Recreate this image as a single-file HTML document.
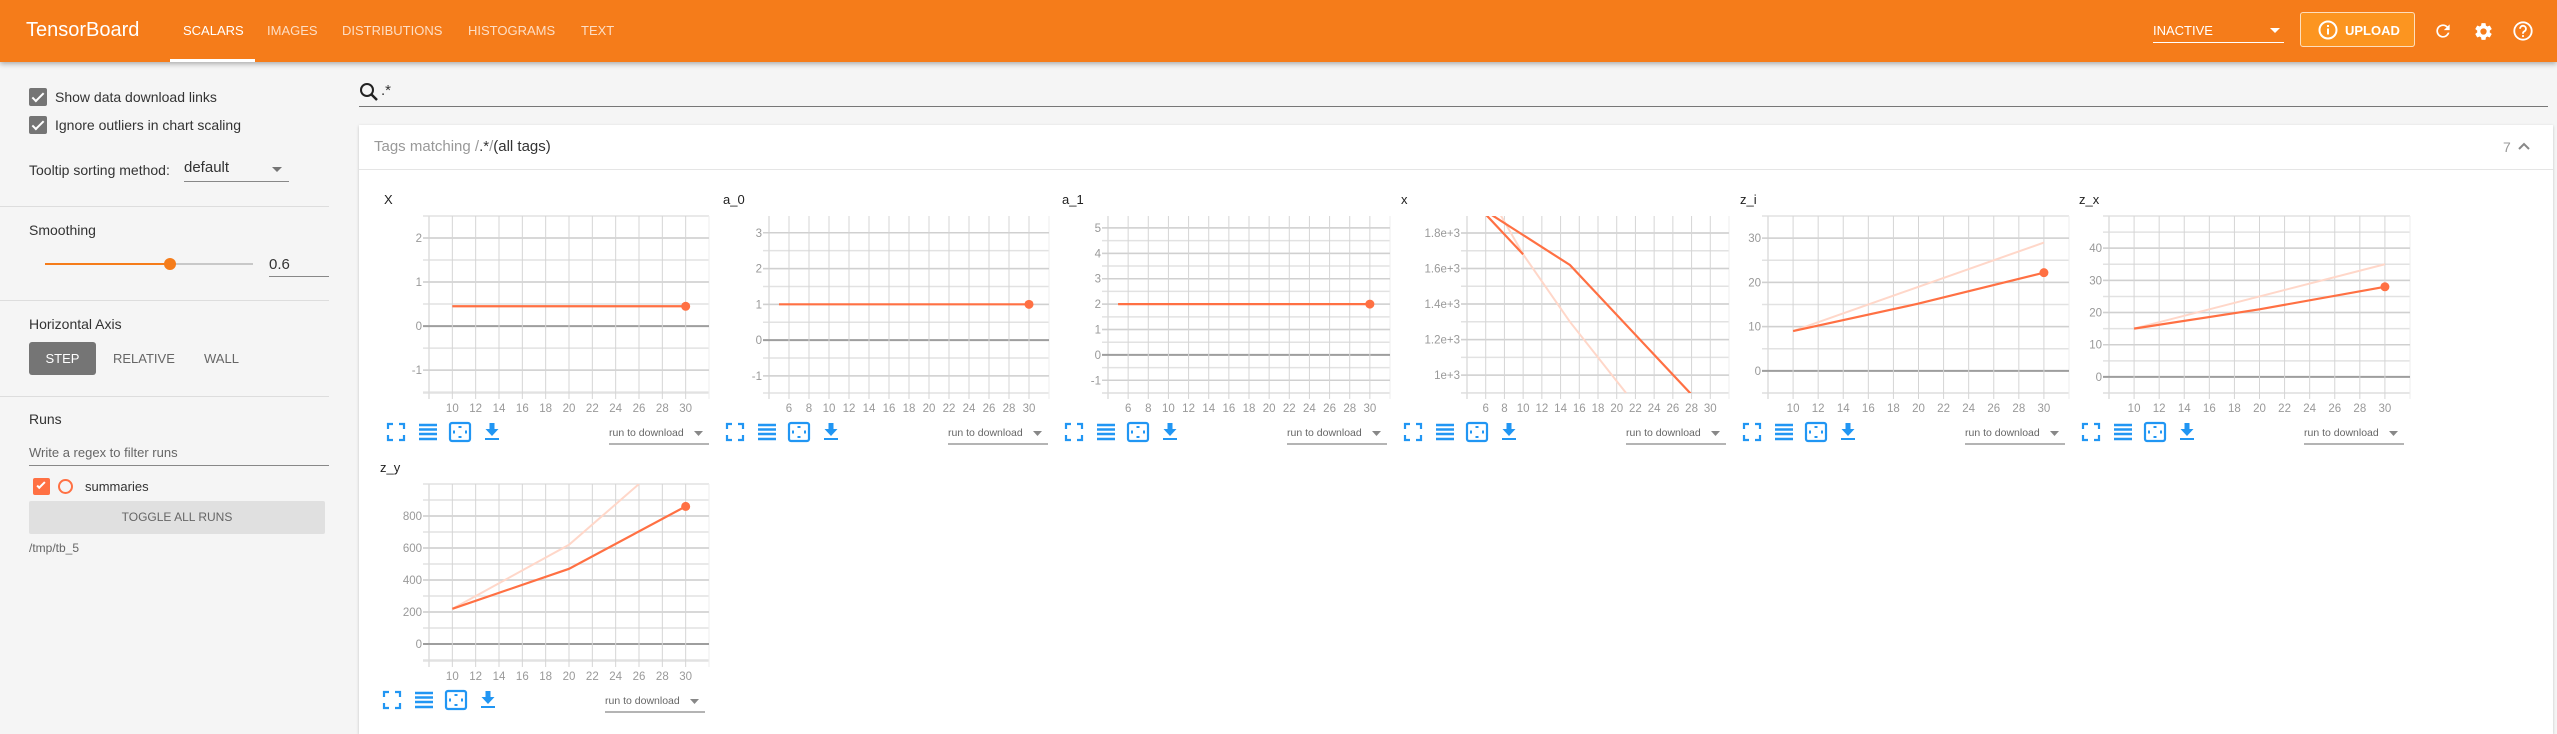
<!DOCTYPE html>
<html><head><meta charset="utf-8">
<style>
*{box-sizing:border-box;margin:0;padding:0}
body{width:2557px;height:734px;overflow:hidden;background:#f5f5f5;font-family:"Liberation Sans",sans-serif;position:relative;color:#212121}
.a{position:absolute;white-space:nowrap}
#hdr{position:absolute;left:0;top:0;width:2557px;height:62px;background:#f57c1a;box-shadow:0 2px 5px rgba(0,0,0,.3);z-index:2}
.nav{position:absolute;top:23px;font-size:13px;color:rgba(255,255,255,.75)}
.cb{position:absolute;width:18px;height:18px;background:#757575;border-radius:2px}
.cb:after{content:"";position:absolute;left:6px;top:2px;width:4px;height:10px;border:solid #fff;border-width:0 2px 2px 0;transform:rotate(45deg)}
.hr{position:absolute;left:0;width:329px;height:1px;background:#ddd}
.sb{font-size:14px;color:#333}
</style></head><body>
<div id="hdr">
 <div class="a" style="left:26px;top:19px;font-size:20px;color:#fff">TensorBoard</div>
 <div class="nav" style="left:183px;color:#fff">SCALARS</div>
 <div class="nav" style="left:267px">IMAGES</div>
 <div class="nav" style="left:342px">DISTRIBUTIONS</div>
 <div class="nav" style="left:468px">HISTOGRAMS</div>
 <div class="nav" style="left:581px">TEXT</div>
 <div class="a" style="left:170px;top:59px;width:85px;height:3px;background:#fff"></div>
 <div class="a" style="left:2153px;top:23px;font-size:13px;color:#fff">INACTIVE</div>
 <div class="a" style="left:2270px;top:28px;width:0;height:0;border-left:5px solid transparent;border-right:5px solid transparent;border-top:5px solid #fff"></div>
 <div class="a" style="left:2153px;top:42px;width:131px;height:1px;background:#fff"></div>
 <div class="a" style="left:2300px;top:12px;width:115px;height:35px;border:1px solid rgba(255,255,255,.7);border-radius:3px;background:#fc9520"></div>
 <svg class="a" style="left:2318px;top:20px" width="20" height="20" viewBox="0 0 20 20"><circle cx="10" cy="10" r="8.5" fill="none" stroke="#fff" stroke-width="2"/><rect x="9" y="8.5" width="2" height="6" fill="#fff"/><rect x="9" y="5" width="2" height="2" fill="#fff"/></svg>
 <div class="a" style="left:2345px;top:23px;font-size:13px;color:#fff;font-weight:bold">UPLOAD</div>
 <svg class="a" style="left:2433px;top:21px" width="20" height="20" viewBox="0 0 24 24"><path fill="#fff" d="M17.65 6.35A7.96 7.96 0 0 0 12 4a8 8 0 1 0 7.73 10h-2.08A6 6 0 1 1 12 6c1.66 0 3.14.69 4.22 1.78L13 11h7V4l-2.35 2.35z"/></svg>
 <svg class="a" style="left:2473px;top:21px" width="21" height="21" viewBox="0 0 24 24"><path fill="#fff" d="M19.14 12.94c.04-.3.06-.61.06-.94 0-.32-.02-.64-.07-.94l2.03-1.58a.49.49 0 0 0 .12-.61l-1.92-3.32a.49.49 0 0 0-.59-.22l-2.39.96c-.5-.38-1.03-.7-1.62-.94l-.36-2.54a.48.48 0 0 0-.48-.41h-3.84c-.24 0-.43.17-.47.41l-.36 2.54c-.59.24-1.13.57-1.62.94l-2.39-.96a.48.48 0 0 0-.59.22L2.74 8.87c-.12.21-.08.47.12.61l2.03 1.58c-.05.3-.09.63-.09.94s.02.64.07.94l-2.03 1.58a.49.49 0 0 0-.12.61l1.92 3.32c.12.22.37.29.59.22l2.39-.96c.5.38 1.03.7 1.62.94l.36 2.54c.05.24.24.41.48.41h3.84c.24 0 .44-.17.47-.41l.36-2.54c.59-.24 1.13-.56 1.62-.94l2.39.96c.22.08.47 0 .59-.22l1.92-3.32c.12-.22.07-.47-.12-.61l-2.01-1.58zM12 15.6A3.6 3.6 0 1 1 12 8.4a3.6 3.6 0 0 1 0 7.2z"/></svg>
 <svg class="a" style="left:2512px;top:20px" width="22" height="22" viewBox="0 0 24 24"><circle cx="12" cy="12" r="9.5" fill="none" stroke="#fff" stroke-width="2"/><path d="M8.8 9.5a3.2 3.2 0 1 1 4.6 2.9c-.9.5-1.4 1-1.4 2.1v.5" fill="none" stroke="#fff" stroke-width="2"/><rect x="11" y="16.5" width="2" height="2" fill="#fff"/></svg>
</div>

<!-- sidebar -->
<div class="cb" style="left:29px;top:88px"></div>
<div class="a sb" style="left:55px;top:89px">Show data download links</div>
<div class="cb" style="left:29px;top:116px"></div>
<div class="a sb" style="left:55px;top:117px">Ignore outliers in chart scaling</div>
<div class="a sb" style="left:29px;top:162px">Tooltip sorting method:</div>
<div class="a" style="left:184px;top:159px;font-size:15px;color:#333">default</div>
<div class="a" style="left:272px;top:167px;border-left:5px solid transparent;border-right:5px solid transparent;border-top:5px solid #757575"></div>
<div class="a" style="left:184px;top:181px;width:105px;height:1px;background:#888"></div>
<div class="hr" style="top:206px"></div>
<div class="a sb" style="left:29px;top:222px">Smoothing</div>
<div class="a" style="left:45px;top:263px;width:208px;height:2px;background:#c8c8c8"></div>
<div class="a" style="left:45px;top:263px;width:125px;height:2px;background:#f57c1a"></div>
<div class="a" style="left:164px;top:258px;width:12px;height:12px;border-radius:50%;background:#f57c1a"></div>
<div class="a" style="left:269px;top:256px;font-size:15px;color:#333">0.6</div>
<div class="a" style="left:269px;top:276px;width:60px;height:1px;background:#888"></div>
<div class="hr" style="top:300px"></div>
<div class="a sb" style="left:29px;top:316px">Horizontal Axis</div>
<div class="a" style="left:29px;top:342px;width:67px;height:33px;background:#757575;border-radius:3px;color:#fff;font-size:13px;text-align:center;line-height:33px">STEP</div>
<div class="a" style="left:113px;top:351px;font-size:13px;color:#666">RELATIVE</div>
<div class="a" style="left:204px;top:351px;font-size:13px;color:#666">WALL</div>
<div class="hr" style="top:396px"></div>
<div class="a sb" style="left:29px;top:411px">Runs</div>
<div class="a" style="left:29px;top:445px;font-size:13px;color:#666">Write a regex to filter runs</div>
<div class="a" style="left:29px;top:465px;width:300px;height:1px;background:#888"></div>
<div class="a" style="left:33px;top:478px;width:17px;height:17px;background:#ff7043;border-radius:2px"></div>
<div class="a" style="left:39px;top:480px;width:4px;height:9px;border:solid #fff;border-width:0 2px 2px 0;transform:rotate(45deg)"></div>
<div class="a" style="left:58px;top:479px;width:15px;height:15px;border:2px solid #ff7043;border-radius:50%"></div>
<div class="a" style="left:85px;top:479px;font-size:13px;color:#333">summaries</div>
<div class="a" style="left:29px;top:501px;width:296px;height:33px;background:#e0e0e0;border-radius:2px;text-align:center;line-height:33px;font-size:12px;color:#666">TOGGLE ALL RUNS</div>
<div class="a" style="left:29px;top:541px;font-size:12px;color:#666">/tmp/tb_5</div>

<!-- main -->
<svg class="a" style="left:359px;top:82px" width="20" height="20" viewBox="0 0 20 20"><circle cx="8" cy="8" r="6" fill="none" stroke="#222" stroke-width="2"/><path d="M12.5 12.5 18 18" stroke="#222" stroke-width="2.5"/></svg>
<div class="a" style="left:381px;top:82px;font-size:15px;color:#333">.*</div>
<div class="a" style="left:359px;top:106px;width:2189px;height:1px;background:#777"></div>
<div class="a" style="left:359px;top:125px;width:2194px;height:609px;background:#fff;box-shadow:0 1px 3px rgba(0,0,0,.2)"></div>
<div class="a" style="left:359px;top:169px;width:2194px;height:1px;background:#e5e5e5"></div>
<div class="a" style="left:374px;top:138px;font-size:15px;color:#999">Tags matching /<span style="color:#333">.*</span>/<span style="color:#333">(all tags)</span></div>
<div class="a" style="left:2503px;top:139px;font-size:14px;color:#999">7</div>
<svg class="a" style="left:2517px;top:140px" width="14" height="12" viewBox="0 0 14 12"><path d="M2 9 7 4 12 9" fill="none" stroke="#888" stroke-width="2"/></svg>
<div id="charts"></div>
<script>
var S='';
function ch(c){
 var ty=c.ty,top=ty+18,bot=ty+195,pl=c.tx+c.l,pr=c.tx+c.r;
 var X=function(v){return pl+(v-c.xd[0])/(c.xd[1]-c.xd[0])*(pr-pl)};
 var Y=function(v){return bot-(v-c.yd[0])/(c.yd[1]-c.yd[0])*(bot-top)};
 var s='<svg class="a" style="left:0;top:0" width="2557" height="734">';
 s+='<text x="'+c.tx+'" y="'+(ty+6)+'" font-size="13" fill="#222" font-family="Liberation Sans">'+c.t+'</text>';
 for(var v=Math.ceil(c.yd[0]/c.ys)*c.ys;v<=c.yd[1]+1e-9;v+=c.ys){var y=Y(v);s+='<line x1="'+(pl-6)+'" x2="'+pr+'" y1="'+y+'" y2="'+y+'" stroke="#e2e2e2" stroke-width="1.5"/>';}
 s+='<line x1="'+(pl-6)+'" x2="'+pr+'" y1="'+bot+'" y2="'+bot+'" stroke="#e2e2e2" stroke-width="1.5"/>';
 s+='<line x1="'+pl+'" x2="'+pl+'" y1="'+top+'" y2="'+(bot+6)+'" stroke="#ddd" stroke-width="1.5"/>';
 s+='<line x1="'+pr+'" x2="'+pr+'" y1="'+top+'" y2="'+(bot+6)+'" stroke="#eee" stroke-width="1"/>';
 c.yt.forEach(function(t){var y=Y(t[0]);s+='<line x1="'+(pl-6)+'" x2="'+pr+'" y1="'+y+'" y2="'+y+'" stroke="'+(t[0]==0?'#9e9e9e':'#d0d0d0')+'" stroke-width="'+(t[0]==0?2:1.5)+'"/><text x="'+(pl-7)+'" y="'+(y+4)+'" font-size="11.5" fill="#999" text-anchor="end" font-family="Liberation Sans">'+t[1]+'</text>';});
 for(var v=c.x0;v<=30;v+=2){var x=X(v);s+='<line x1="'+x+'" x2="'+x+'" y1="'+top+'" y2="'+(bot+6)+'" stroke="#d5d5d5" stroke-width="1"/><text x="'+x+'" y="'+(bot+19)+'" font-size="11.5" fill="#999" text-anchor="middle" font-family="Liberation Sans">'+v+'</text>';}
 s+='<defs><clipPath id="cp'+c.t+'"><rect x="'+pl+'" y="'+top+'" width="'+(pr-pl)+'" height="'+(bot-top)+'"/></clipPath></defs><g clip-path="url(#cp'+c.t+')">';
 (c.lt||[]).forEach(function(L){s+='<polyline fill="none" stroke="#ffd7c9" stroke-width="2" points="'+L.map(function(p){return X(p[0])+','+Y(p[1])}).join(' ')+'"/>';});
 c.ln.forEach(function(L){s+='<polyline fill="none" stroke="#ff7043" stroke-width="2.2" points="'+L.map(function(p){return X(p[0])+','+Y(p[1])}).join(' ')+'"/>';});
 s+='</g>';
 if(c.d)s+='<circle cx="'+X(c.d[0])+'" cy="'+Y(c.d[1])+'" r="4.5" fill="#ff7043"/>';
 var iy=bot+39,ix=c.tx+12,b='#2196f3';
 s+='<path d="M'+(ix-8)+' '+(iy-3)+'v-5h5M'+(ix+3)+' '+(iy-8)+'h5v5M'+(ix+8)+' '+(iy+3)+'v5h-5M'+(ix-3)+' '+(iy+8)+'h-5v-5" fill="none" stroke="'+b+'" stroke-width="2.2"/>';
 ix+=32;s+='<path d="M'+(ix-9)+' '+(iy-7)+'h18M'+(ix-9)+' '+(iy-2.5)+'h18M'+(ix-9)+' '+(iy+2)+'h18M'+(ix-9)+' '+(iy+7)+'h18" stroke="'+b+'" stroke-width="2.5"/>';
 ix+=32;s+='<rect x="'+(ix-10)+'" y="'+(iy-9)+'" width="20" height="18" rx="2" fill="none" stroke="'+b+'" stroke-width="2.2"/><path d="M'+(ix-1.5)+' '+(iy-5)+'h3M'+(ix-1.5)+' '+(iy+5)+'h3M'+(ix-6)+' '+(iy-1.5)+'v3M'+(ix+6)+' '+(iy-1.5)+'v3" stroke="'+b+'" stroke-width="2"/>';
 ix+=32;s+='<path d="M'+(ix-2.5)+' '+(iy-9)+'h5v6h4l-6.5 7-6.5-7h4z" fill="'+b+'"/><rect x="'+(ix-7)+'" y="'+(iy+6)+'" width="14" height="2" fill="'+b+'"/>';
 s+='<text x="'+(c.tx+225)+'" y="'+(iy+4)+'" font-size="10.5" fill="#666" font-family="Liberation Sans">run to download</text><path d="M'+(c.tx+310)+' '+(iy-1)+'h9l-4.5 5z" fill="#888"/><line x1="'+(c.tx+225)+'" x2="'+(c.tx+325)+'" y1="'+(iy+12)+'" y2="'+(iy+12)+'" stroke="#888" stroke-width="1.2"/>';
 return s+'</svg>';
}
var E=[8,32];
S+=ch({t:'X',tx:384,ty:198,l:45,r:325,xd:E,x0:10,yd:[-1.52,2.5],ys:0.5,yt:[[2,'2'],[1,'1'],[0,'0'],[-1,'-1']],ln:[[[10,0.45],[30,0.45]]],d:[30,0.45]});
S+=ch({t:'a_0',tx:723,ty:198,l:46,r:326,xd:[4,32],x0:6,yd:[-1.48,3.47],ys:0.5,yt:[[3,'3'],[2,'2'],[1,'1'],[0,'0'],[-1,'-1']],ln:[[[5,1],[30,1]]],d:[30,1]});
S+=ch({t:'a_1',tx:1062,ty:198,l:46,r:328,xd:[4,32],x0:6,yd:[-1.5,5.47],ys:0.5,yt:[[5,'5'],[4,'4'],[3,'3'],[2,'2'],[1,'1'],[0,'0'],[-1,'-1']],ln:[[[5,2],[30,2]]],d:[30,2]});
S+=ch({t:'x',tx:1401,ty:198,l:66,r:328,xd:[4,32],x0:6,yd:[899,1896],ys:100,yt:[[1800,'1.8e+3'],[1600,'1.6e+3'],[1400,'1.4e+3'],[1200,'1.2e+3'],[1000,'1e+3']],
 lt:[[[7.5,1910],[10,1680],[15,1300],[21,899]]],ln:[[[6.4,1910],[15,1620],[28,890]],[[6,1905],[10,1680]]]});
S+=ch({t:'z_i',tx:1740,ty:198,l:28,r:329,xd:E,x0:10,yd:[-5,35],ys:5,yt:[[30,'30'],[20,'20'],[10,'10'],[0,'0']],lt:[[[10,9],[30,29]]],ln:[[[10,9],[20,15.2],[30,22.2]]],d:[30,22.2]});
S+=ch({t:'z_x',tx:2079,ty:198,l:30,r:331,xd:E,x0:10,yd:[-5,50],ys:5,yt:[[40,'40'],[30,'30'],[20,'20'],[10,'10'],[0,'0']],lt:[[[10,15],[30,35]]],ln:[[[10,15],[20,21],[30,28]]],d:[30,28]});
S+=ch({t:'z_y',tx:380,ty:466,l:49,r:329,xd:E,x0:10,yd:[-106,1000],ys:100,yt:[[800,'800'],[600,'600'],[400,'400'],[200,'200'],[0,'0']],lt:[[[10,220],[20,620],[26,1000]]],ln:[[[10,220],[20,470],[30,860]]],d:[30,860]});
document.getElementById('charts').innerHTML=S;
</script>
</body></html>
